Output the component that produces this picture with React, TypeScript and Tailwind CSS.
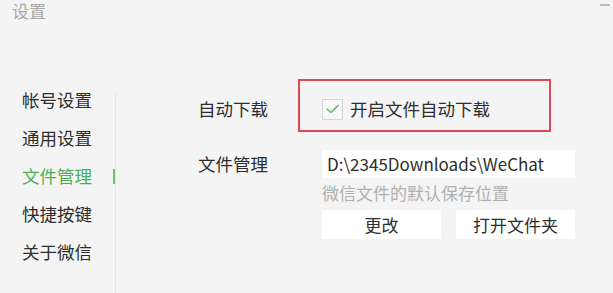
const navItems = ['帐号设置', '通用设置', '文件管理', '快捷按键', '关于微信']

function CheckIcon() {
  return (
    <svg width="13" height="10" viewBox="0 0 13 10" fill="none">
      <polyline
        points="1,5 5,8.5 12,1.5"
        stroke="#5dba6a"
        strokeWidth="1.6"
        strokeLinecap="round"
        strokeLinejoin="round"
      />
    </svg>
  )
}

export default function App() {
  const active = '文件管理'

  return (
    <div className="flex h-[293px] w-[613px] flex-col overflow-hidden bg-[#f4f4f4] font-['Noto_Sans_CJK_SC','Noto_Sans',sans-serif] text-[#2e2e2e]">
      <div className="flex h-[26px] shrink-0 items-start justify-between pl-[12px] pr-[3px] pt-[1px]">
        <span className="text-[17px] leading-[20px] text-[#a8a8a8]">设置</span>
        <span className="mt-[3px] h-[2px] w-[10px] bg-[#bdbdbd]" />
      </div>

      <div className="flex flex-1">
        <div className="flex w-[115px] shrink-0 flex-col pl-[22px] pt-[55px]">
          {navItems.map((item) => (
            <div key={item} className="flex h-[38px] items-center justify-between">
              <span
                className={
                  item === active
                    ? 'text-[17.5px] leading-[20px] text-[#4caf55]'
                    : 'text-[17.5px] leading-[20px] text-[#2e2e2e]'
                }
              >
                {item}
              </span>
              {item === active ? (
                <span className="mr-[-1px] h-[15px] w-[3px] bg-[#62c46b]" />
              ) : null}
            </div>
          ))}
        </div>
        <div className="mt-[67px] w-px shrink-0 bg-[#e6e6e6]" />

        <div className="flex flex-col pl-[82px] pt-[69px]">
          <div className="flex h-[28px] items-center">
            <span className="w-[124px] text-[17.5px] leading-[20px]">自动下载</span>
            <div className="relative flex items-center gap-[7px]">
              <span className="flex h-[21px] w-[21px] items-center justify-center border border-[#d6d6d6] bg-[#f7f7f7]">
                <CheckIcon />
              </span>
              <span className="text-[17.5px] leading-[20px]">开启文件自动下载</span>
              <span className="pointer-events-none absolute left-[-24px] top-[-20px] h-[53px] w-[253px] border-2 border-[#dd4a55]" />
            </div>
          </div>

          <div className="mt-[27px] flex h-[28px] items-center">
            <span className="w-[124px] text-[17.5px] leading-[20px]">文件管理</span>
            <div className="flex h-[28px] w-[253px] items-center bg-white pl-[5px] text-[17px] leading-[20px] whitespace-nowrap">
              D:\2345Downloads\WeChat
            </div>
          </div>

          <div className="ml-[124px] mt-[4px] text-[17px] leading-[22px] text-[#b0b0b0]">
            微信文件的默认保存位置
          </div>

          <div className="ml-[124px] mt-[6px] flex gap-[15px]">
            <button className="h-[29px] w-[119px] bg-white text-[17px] text-[#2e2e2e]">更改</button>
            <button className="h-[29px] w-[119px] bg-white text-[17px] text-[#2e2e2e]">打开文件夹</button>
          </div>
        </div>
      </div>
    </div>
  )
}
